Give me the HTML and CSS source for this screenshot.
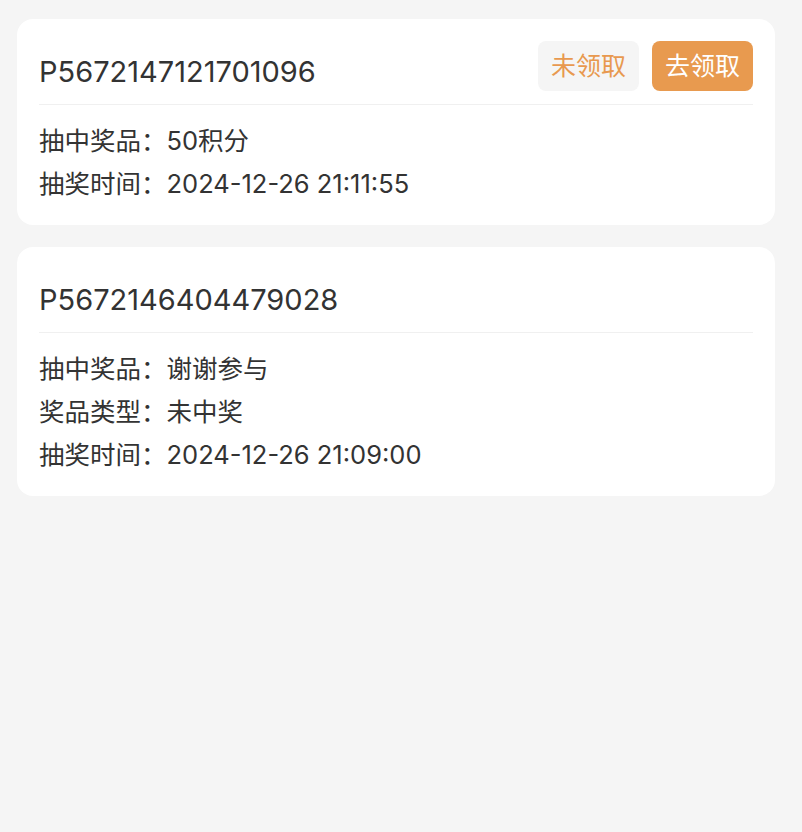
FILE: index.html
```html
<!DOCTYPE html>
<html lang="zh-CN">
<head>
<meta charset="UTF-8" />
<meta name="viewport" content="width=device-width, initial-scale=1" />
<title>中奖记录</title>
<link rel="stylesheet" href="styles.css">
</head>
<body>
<div class="list">
  <div class="record">
    <div class="record-head">
      <span class="record-no">P5672147121701096</span>
      <div class="record-actions">
        <span class="tag">未领取</span>
        <button class="btn-claim">去领取</button>
      </div>
    </div>
    <div class="record-body">
      <p>抽中奖品：50积分</p>
      <p>抽奖时间：2024-12-26 21:11:55</p>
    </div>
  </div>

  <div class="record">
    <div class="record-head">
      <span class="record-no">P5672146404479028</span>
    </div>
    <div class="record-body">
      <p>抽中奖品：谢谢参与</p>
      <p>奖品类型：未中奖</p>
      <p>抽奖时间：2024-12-26 21:09:00</p>
    </div>
  </div>
</div>
</body>
</html>
```

FILE: styles.css
```css
body {
  margin: 0;
  padding: 0;
  background: #f5f5f5;
  color: #333;
  font-family: Inter, "Noto Sans CJK SC", sans-serif;
}
.list {
  padding: 19px 27px 0 17px;
  display: flex;
  flex-direction: column;
  gap: 22px;
}
.record {
  background: #fff;
  border-radius: 16px;
  padding: 0 22px;
}
.record-head {
  height: 86px;
  box-sizing: border-box;
  display: flex;
  justify-content: space-between;
  align-items: flex-start;
  border-bottom: 1px solid #f0f0f0;
}
.record-no {
  margin-top: 33px;
  font-size: 29px;
  line-height: 40px;
}
.record-actions {
  margin-top: 22px;
  display: flex;
  gap: 13px;
}
.tag,
.btn-claim {
  height: 50px;
  padding: 0 13px;
  border-radius: 8px;
  font-size: 25px;
  line-height: 50px;
  font-family: inherit;
}
.tag {
  background: #f5f5f5;
  color: #e8994f;
}
.btn-claim {
  border: none;
  background: #e89a4f;
  color: #fff;
  cursor: pointer;
}
.record-body {
  padding: 14px 0 20px;
}
.record-body p {
  margin: 0;
  font-size: 25.5px;
  line-height: 43px;
}
```
